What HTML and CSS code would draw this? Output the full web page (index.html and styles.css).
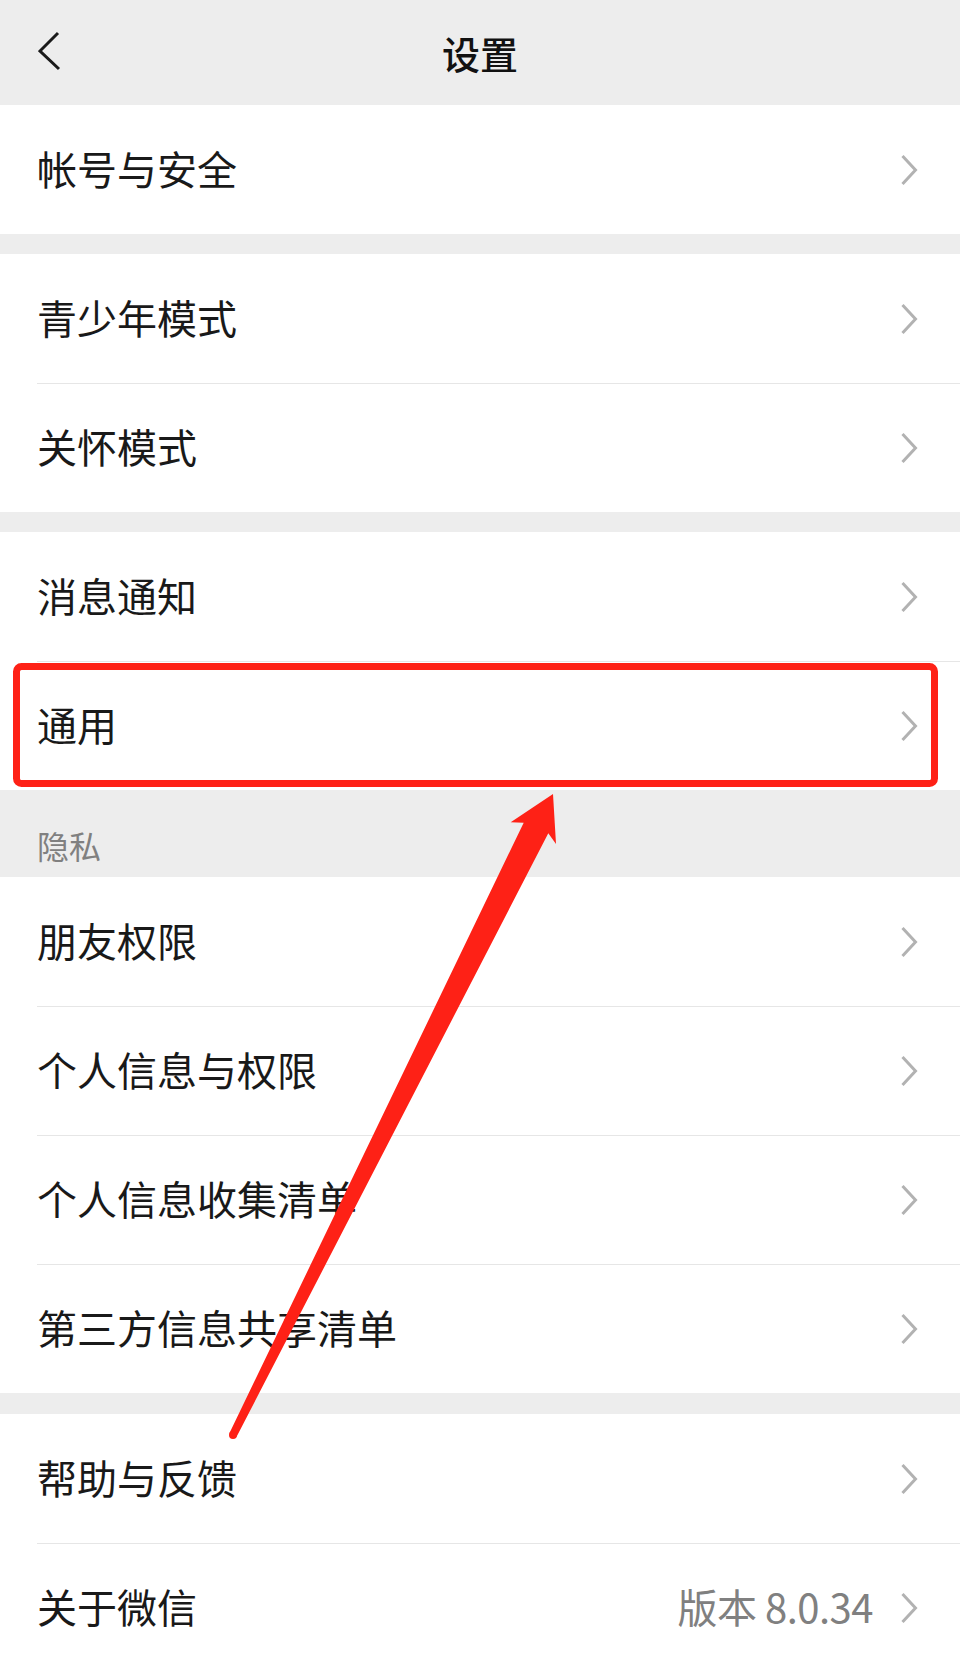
FILE: index.html
```html
<!DOCTYPE html>
<html lang="zh-CN">
<head>
    <meta charset="UTF-8">
    <meta name="viewport" content="width=device-width, initial-scale=1.0">
    <title>设置</title>
    <link rel="stylesheet" href="styles.css">
</head>
<body>
    <div class="page">
        <div class="topbar">
            <svg class="back" width="24" height="40" viewBox="0 0 24 40">
                <polyline points="20,2 2,20 21,38" />
            </svg>
            <h1 class="title">设置</h1>
        </div>

        <div class="group">
            <div class="row"><span class="label">帐号与安全</span><svg class="chev" width="18" height="32" viewBox="0 0 18 32"><polyline points="2.5,2 15.5,16 2.5,30" /></svg></div>
        </div>

        <div class="group">
            <div class="row"><span class="label">青少年模式</span><svg class="chev" width="18" height="32" viewBox="0 0 18 32"><polyline points="2.5,2 15.5,16 2.5,30" /></svg></div>
            <div class="row"><span class="label">关怀模式</span><svg class="chev" width="18" height="32" viewBox="0 0 18 32"><polyline points="2.5,2 15.5,16 2.5,30" /></svg></div>
        </div>

        <div class="group">
            <div class="row"><span class="label">消息通知</span><svg class="chev" width="18" height="32" viewBox="0 0 18 32"><polyline points="2.5,2 15.5,16 2.5,30" /></svg></div>
            <div class="row"><span class="label">通用</span><svg class="chev" width="18" height="32" viewBox="0 0 18 32"><polyline points="2.5,2 15.5,16 2.5,30" /></svg></div>
        </div>

        <div class="section-title">隐私</div>
        <div class="group group-flush">
            <div class="row"><span class="label">朋友权限</span><svg class="chev" width="18" height="32" viewBox="0 0 18 32"><polyline points="2.5,2 15.5,16 2.5,30" /></svg></div>
            <div class="row"><span class="label">个人信息与权限</span><svg class="chev" width="18" height="32" viewBox="0 0 18 32"><polyline points="2.5,2 15.5,16 2.5,30" /></svg></div>
            <div class="row"><span class="label">个人信息收集清单</span><svg class="chev" width="18" height="32" viewBox="0 0 18 32"><polyline points="2.5,2 15.5,16 2.5,30" /></svg></div>
            <div class="row"><span class="label">第三方信息共享清单</span><svg class="chev" width="18" height="32" viewBox="0 0 18 32"><polyline points="2.5,2 15.5,16 2.5,30" /></svg></div>
        </div>

        <div class="group">
            <div class="row"><span class="label">帮助与反馈</span><svg class="chev" width="18" height="32" viewBox="0 0 18 32"><polyline points="2.5,2 15.5,16 2.5,30" /></svg></div>
            <div class="row"><span class="label">关于微信</span><span class="value">版本 8.0.34</span><svg class="chev" width="18" height="32" viewBox="0 0 18 32"><polyline points="2.5,2 15.5,16 2.5,30" /></svg></div>
        </div>

        <!-- annotation drawn over the screenshot -->
        <svg class="markup" width="960" height="1660" viewBox="0 0 960 1660">
            <rect x="16.5" y="666.5" width="918" height="117" rx="5" ry="5" class="mark-box" />
            <path class="mark-arrow" d="M229.4,1433.2 L523.7,822.7 L510.7,822.3 L553,794 L556,844 L548.3,833.3 L236.6,1436.8 Z" />
            <circle class="mark-arrow" cx="233" cy="1435" r="4" />
        </svg>
    </div>
</body>
</html>
```

FILE: styles.css
```css
body {
    margin: 0;
    background: #ededed;
    font-family: "Noto Sans CJK SC", "Noto Sans", sans-serif;
    color: #191919;
}
.page {
    position: relative;
    width: 960px;
    height: 1660px;
    overflow: hidden;
}
.topbar {
    height: 105px;
    display: flex;
    align-items: center;
    justify-content: center;
    position: relative;
}
.back {
    position: absolute;
    left: 38px;
    top: 31px;
    fill: none;
    stroke: #1a1a1a;
    stroke-width: 3;
}
.title {
    margin: 0;
    font-size: 38px;
    font-weight: 500;
    line-height: 1;
    color: #111;
}
.group {
    background: #fff;
    margin-bottom: 20px;
}
.group-flush {
    margin-bottom: 21px;
}
.row {
    box-sizing: border-box;
    height: 129px;
    margin-left: 37px;
    padding-right: 42px;
    display: flex;
    align-items: center;
}
.row + .row {
    border-top: 1px solid #e6e6e6;
}
.label {
    flex: 1;
    font-size: 40px;
    line-height: 1;
    padding-bottom: 4px;
}
.value {
    font-size: 40px;
    line-height: 1;
    padding-bottom: 4px;
    letter-spacing: -0.5px;
    color: #808080;
    margin-right: 27px;
}
.chev {
    fill: none;
    stroke: #b2b2b2;
    stroke-width: 3;
}
.section-title {
    box-sizing: border-box;
    height: 87px;
    padding: 0 0 16px 37px;
    margin-top: -20px;
    display: flex;
    align-items: flex-end;
    font-size: 32px;
    line-height: 32px;
    color: #808080;
}
.markup {
    position: absolute;
    top: 0;
    left: 0;
    pointer-events: none;
}
.mark-box {
    fill: none;
    stroke: #fe2116;
    stroke-width: 7;
}
.mark-arrow {
    fill: #fe2116;
}
```
